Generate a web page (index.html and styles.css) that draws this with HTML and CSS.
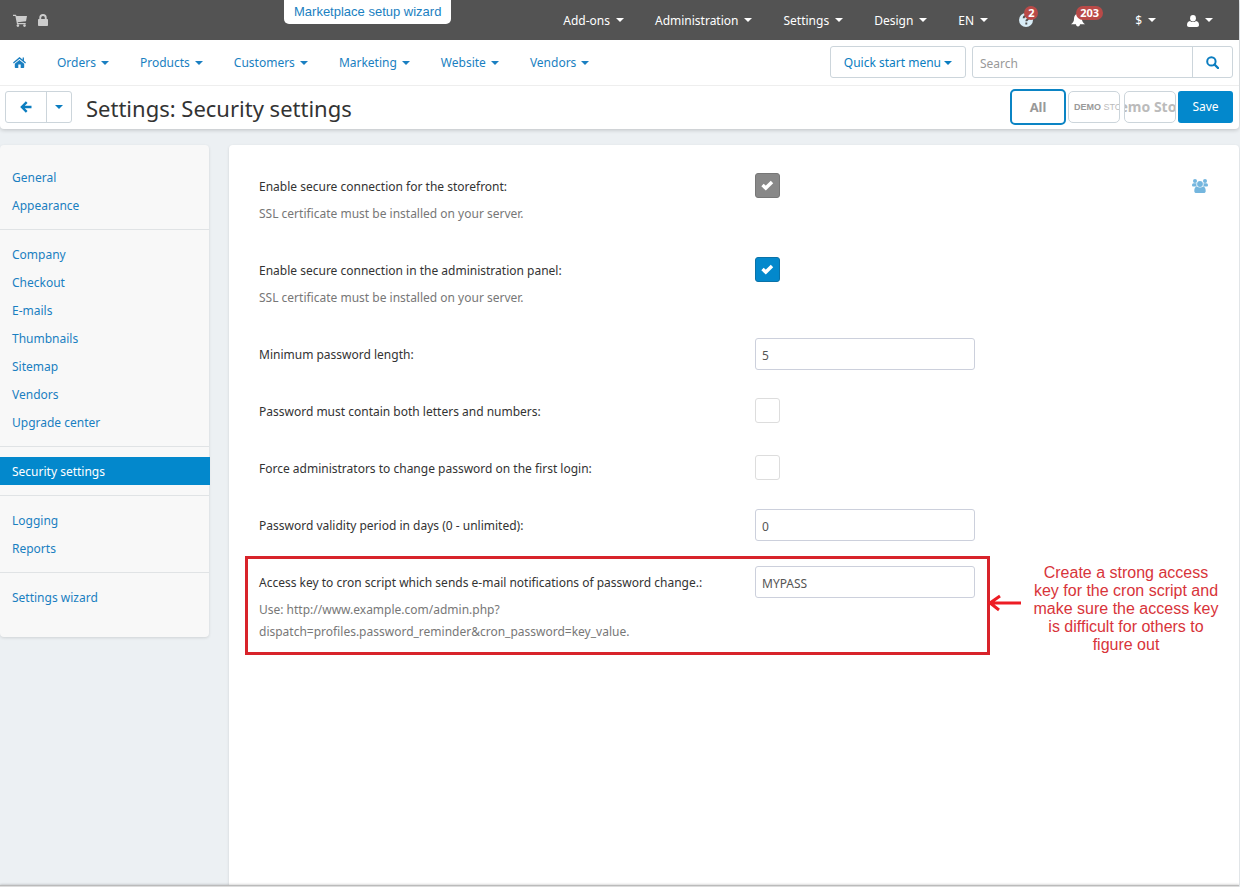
FILE: index.html
```html
<!DOCTYPE html>
<html lang="en">
  <head>
    <meta charset="utf-8">
    <title>Settings: Security settings</title>
    <link rel="stylesheet" href="styles.css">
  </head>
  <body>
    <header class="header">
      <div class="topbar">
        <div class="topbar-left">
          <a href="#" aria-label="Storefront"><svg width="14" height="13" viewBox="0 0 14 13"><path fill="currentColor" d="M0 .7h2.6c.4 0 .6.3.7.8l.1.5H14l-1 5.2-8.3 1 .2.9h7.8v1.1H4L2.4 1.9H0z"/><circle cx="4.9" cy="11.6" r="1.3" fill="currentColor"/><circle cx="11.5" cy="11.6" r="1.3" fill="currentColor"/></svg></a>
          <a href="#" aria-label="Secure"><svg width="12" height="12" viewBox="0 0 12 12"><path fill="currentColor" d="M2.3 5V3.7a3.7 3.7 0 0 1 7.4 0V5h.5c.5 0 .8.3.8.8v5.4c0 .5-.3.8-.8.8H1.800c-.5 0-.8-.3-.8-.8V5.800c0-.5.3-.8.8-.8zM4.200 5h3.600V3.700a1.800 1.800 0 0 0-3.600 0z"/></svg></a>
        </div>
        <a href="#" class="wizard-tab">Marketplace setup wizard</a>
        <nav class="topbar-nav">
          <a href="#" class="drop">Add-ons</a>
          <a href="#" class="drop">Administration</a>
          <a href="#" class="drop">Settings</a>
          <a href="#" class="drop">Design</a>
          <a href="#" class="drop">EN</a>
          <a href="#" class="notify help" aria-label="Help">
            <svg width="14" height="14" viewBox="0 0 14 14"><circle cx="7" cy="7" r="7" fill="#d9edf7"/><path d="M4.700 5.200c0-3 4.800-3 4.800-.1C9.500 6.800 7.300 6.500 7.300 8.300M7.300 9.600v1.900" fill="none" stroke="#535353" stroke-width="1.900"/></svg>
            <span class="badge">2</span>
          </a>
          <a href="#" class="notify bell" aria-label="Notifications">
            <svg width="14" height="14" viewBox="0 0 14 14"><path fill="#fff" d="M7 0c.7 0 1 .5 1 1.100C10.400 1.700 11 4 11 6c0 2.500 1.200 4 3 5.300H9c0 1.300-.8 2.200-2 2.200s-2-.9-2-2.200H0C1.800 10 3 8.500 3 6c0-2 .6-4.300 3-4.900C6 .5 6.300 0 7 0z"/></svg>
            <span class="badge">203</span>
          </a>
          <a href="#" class="drop">$</a>
          <a href="#" class="drop" aria-label="Account"><svg width="12" height="12" viewBox="0 0 12 12"><ellipse cx="6" cy="3.300" rx="2.900" ry="3.300" fill="currentColor"/><path fill="currentColor" d="M3 5.900C1 6.300 0 7.500 0 10c0 1.300.8 2 2 2h8c1.200 0 2-.7 2-2 0-2.500-1-3.700-3-4.100-1.700 1.600-4.300 1.600-6 0z"/></svg></a>
        </nav>
      </div>

      <div class="mainbar">
        <nav class="main-nav">
          <a href="#" class="home" aria-label="Home"><svg width="13" height="11" viewBox="0 0 13 11"><path fill="currentColor" d="M6.500 2.900 11.200 6.700v3.600c0 .4-.3.700-.7.700H7.700V7.600H5.300V11H2.500c-.4 0-.7-.3-.7-.7V6.700z"/><path d="M.4 5.900 6.500.9l6.100 5M10.300.6v3" fill="none" stroke="currentColor" stroke-width="1.300"/></svg></a>
          <a href="#" class="drop">Orders</a>
          <a href="#" class="drop">Products</a>
          <a href="#" class="drop">Customers</a>
          <a href="#" class="drop">Marketing</a>
          <a href="#" class="drop">Website</a>
          <a href="#" class="drop">Vendors</a>
        </nav>
        <button type="button" class="btn quick-menu drop">Quick start menu</button>
        <form class="search">
          <input type="text" placeholder="Search" aria-label="Search">
          <button type="button" aria-label="Find"><svg width="13" height="13" viewBox="0 0 13 13"><circle cx="5.400" cy="5.400" r="4.200" fill="none" stroke="currentColor" stroke-width="2"/><path d="M8.500 8.500 12 12" stroke="currentColor" stroke-width="2.400" stroke-linecap="round"/></svg></button>
        </form>
      </div>

      <div class="titlebar">
        <div class="back-group">
          <button type="button" class="back" aria-label="Back"><svg width="12" height="12" viewBox="0 0 12 12"><path d="M11.500 6H2M6.700 1.200 1.900 6l4.800 4.800" fill="none" stroke="currentColor" stroke-width="2.400"/></svg></button>
          <button type="button" class="back-drop drop" aria-label="History"></button>
        </div>
        <h1 class="title">Settings: Security settings</h1>
        <div class="stores">
          <button type="button" class="store store-all">All</button>
          <button type="button" class="store store-logo"><span><b>DEMO</b> STORE</span></button>
          <button type="button" class="store store-name"><span>Demo Store</span></button>
          <button type="button" class="save">Save</button>
        </div>
      </div>
    </header>

    <div class="content">
      <aside class="sidebar">
        <ul>
          <li><a href="#">General</a></li>
          <li><a href="#">Appearance</a></li>
        </ul>
        <ul>
          <li><a href="#">Company</a></li>
          <li><a href="#">Checkout</a></li>
          <li><a href="#">E-mails</a></li>
          <li><a href="#">Thumbnails</a></li>
          <li><a href="#">Sitemap</a></li>
          <li><a href="#">Vendors</a></li>
          <li><a href="#">Upgrade center</a></li>
        </ul>
        <ul>
          <li class="active"><a href="#">Security settings</a></li>
        </ul>
        <ul>
          <li><a href="#">Logging</a></li>
          <li><a href="#">Reports</a></li>
        </ul>
        <ul>
          <li><a href="#">Settings wizard</a></li>
        </ul>
      </aside>

      <main class="panel">
        <div class="row">
          <div class="text">
            <label for="secure_storefront">Enable secure connection for the storefront:</label>
            <p>SSL certificate must be installed on your server.</p>
          </div>
          <div class="control">
            <input type="checkbox" id="secure_storefront" class="muted" checked>
          </div>
          <a href="#" class="vendors-icon" aria-label="All stores"><svg width="16" height="14" viewBox="0 0 16 14"><g fill="currentColor"><circle cx="3" cy="2" r="2"/><circle cx="13" cy="2" r="2"/><path d="M1.700 4.200h3c-.5 1.200-.4 2.200.2 3.300H1.500C.5 7.500 0 7 0 6.200c0-1.100.6-2 1.700-2zM14.300 4.200h-3c.5 1.200.4 2.200-.2 3.300h3.400c1 0 1.500-.5 1.500-1.300 0-1.100-.6-2-1.700-2z"/><circle cx="8" cy="5" r="2.900"/><path d="M4.900 7.500c2 1.300 4.200 1.300 6.200 0 1.900.2 2.600 2.300 2.600 4.400 0 1.300-.8 2.100-2 2.100H4.300c-1.200 0-2-.8-2-2.100 0-2.100.7-4.200 2.600-4.400z"/></g></svg></a>
        </div>
        <div class="row">
          <div class="text">
            <label for="secure_admin">Enable secure connection in the administration panel:</label>
            <p>SSL certificate must be installed on your server.</p>
          </div>
          <div class="control">
            <input type="checkbox" id="secure_admin" checked>
          </div>
        </div>
        <div class="row">
          <div class="text"><label for="min_length">Minimum password length:</label></div>
          <div class="control"><input type="text" id="min_length" value="5"></div>
        </div>
        <div class="row">
          <div class="text"><label for="mix">Password must contain both letters and numbers:</label></div>
          <div class="control"><input type="checkbox" id="mix"></div>
        </div>
        <div class="row">
          <div class="text"><label for="force">Force administrators to change password on the first login:</label></div>
          <div class="control"><input type="checkbox" id="force"></div>
        </div>
        <div class="row">
          <div class="text"><label for="validity">Password validity period in days (0 - unlimited):</label></div>
          <div class="control"><input type="text" id="validity" value="0"></div>
        </div>
        <div class="row">
          <div class="text">
            <label for="cron_key">Access key to cron script which sends e-mail notifications of password change.:</label>
            <p>Use: http://www.example.com/admin.php?<br>dispatch=profiles.password_reminder&amp;cron_password=key_value.</p>
          </div>
          <div class="control"><input type="text" id="cron_key" value="MYPASS"></div>
          <div class="highlight"></div>
          <div class="callout">
            <svg width="34" height="18" viewBox="0 0 34 18"><path d="M33 9H3M12 2 2 9l9 7" fill="none" stroke="#ed1c24" stroke-width="3"/></svg>
            <p>Create a strong access key for the cron script and make sure the access key is difficult for others to figure out</p>
          </div>
        </div>
      </main>
    </div>
    <footer class="bottom-line"></footer>
  </body>
</html>
```
FILE: styles.css
```css
* {
  box-sizing: border-box;
}
body {
  display: flex;
  flex-direction: column;
  min-height: 100vh;
  margin: 0;
  padding-right: 1px;
  background: #ecf0f3;
  color: #333;
  font: 12px/22px "Noto Sans", "Open Sans", sans-serif;
}
a {
  color: #1a7fc1;
  text-decoration: none;
}
button, input {
  margin: 0;
  font: inherit;
}
button {
  padding: 0;
  color: #0b7dc0;
}
svg {
  display: block;
  flex: none;
}
p, ul {
  margin: 0;
  padding: 0;
  list-style: none;
}

/* links and buttons with a caret */
.drop {
  display: flex;
  align-items: center;
  gap: 5px;
  white-space: nowrap;
}
.drop::after {
  content: "";
  border: 4px solid transparent;
  border-top-color: currentColor;
  border-bottom: 0;
}

/* header */
.header {
  background: #fff;
  border-radius: 0 0 4px 4px;
  box-shadow: 0 1px 4px rgba(0, 0, 0, 0.2);
}
.topbar {
  position: relative;
  display: flex;
  align-items: center;
  justify-content: space-between;
  height: 40px;
  padding: 0 26px 0 13px;
  background: #535353;
}
.topbar-left {
  display: flex;
  align-items: center;
  gap: 10px;
}
.topbar-left a {
  color: #ccc;
}
.wizard-tab {
  position: absolute;
  top: 0;
  left: 284px;
  padding: 1px 10px;
  background: #fff;
  border-radius: 0 0 5px 5px;
  font-family: "Liberation Sans", sans-serif;
  font-size: 13px;
}
.topbar-nav {
  display: flex;
  align-items: center;
  gap: 31px;
}
.topbar-nav a {
  color: #fff;
}
.topbar-nav .drop {
  gap: 6px;
  padding-top: 2px;
}
.topbar-nav .drop::after {
  margin-bottom: 3px;
}
.notify {
  position: relative;
}
.help {
  margin-right: 7px;
}
.bell {
  margin-right: 19px;
}
.badge {
  position: absolute;
  top: -7px;
  left: 5px;
  padding: 0 4px;
  background: #b94a48;
  border-radius: 8px;
  font-size: 11px;
  font-weight: bold;
  line-height: 14px;
}
.mainbar {
  display: flex;
  align-items: center;
  gap: 6px;
  height: 46px;
  padding: 0 6px 1px 13px;
  border-bottom: 1px solid #eee;
}
.main-nav {
  display: flex;
  flex: 1;
  align-items: center;
  gap: 31px;
}
.main-nav .drop {
  padding-top: 2px;
}
.btn, .back-group, .search {
  height: 32px;
  background: #fff;
  border: 1px solid #ccd5db;
  border-radius: 3px;
}
.quick-menu {
  gap: 3px;
  padding: 2px 13px 0;
}
.search {
  display: flex;
  width: 261px;
}
.search input {
  flex: 1;
  min-width: 0;
  padding: 3px 7px 0;
  border: 0;
  background: none;
}
.search input::placeholder {
  color: #999;
}
.search button {
  display: flex;
  align-items: center;
  justify-content: center;
  width: 40px;
  background: none;
  border: 0;
  border-left: 1px solid #ccd5db;
}
.titlebar {
  display: flex;
  align-items: center;
  height: 43px;
  padding: 0 6px 1px 5px;
}
.back-group {
  display: flex;
}
.back, .back-drop {
  justify-content: center;
  background: none;
  border: 0;
}
.back {
  display: flex;
  align-items: center;
  width: 40px;
}
.back-drop {
  width: 25px;
  border-left: 1px solid #ccd5db;
}
.title {
  flex: 1;
  margin: 0 0 0 14px;
  padding-top: 2px;
  font-size: 22px;
  font-weight: normal;
  line-height: 34px;
}
.stores {
  display: flex;
  align-items: center;
}
.store {
  display: flex;
  justify-content: center;
  align-items: center;
  width: 52px;
  height: 32px;
  margin-right: 2px;
  overflow: hidden;
  background: #fff;
  border: 1px solid #ccd5db;
  border-radius: 5px;
  color: #999;
  white-space: nowrap;
}
.store-all {
  width: 56px;
  height: 36px;
  border: 2px solid #0b84c4;
  font-size: 13px;
  font-weight: bold;
}
.store-logo {
  justify-content: flex-start;
  margin-right: 4px;
  padding-left: 5px;
  color: #bbb;
  font-family: "Liberation Sans", sans-serif;
  font-size: 9px;
}
.store-logo b {
  color: #999;
}
.store-name {
  color: #bbb;
  font-size: 14px;
  font-weight: bold;
}
.save {
  width: 55px;
  height: 32px;
  background: #0388cc;
  border: 0;
  border-radius: 3px;
  color: #fff;
}

/* page body */
.content {
  display: flex;
  flex: 1;
  align-items: flex-start;
  gap: 20px;
  padding-top: 16px;
}
.sidebar {
  flex: none;
  width: 209px;
  padding: 18px 0 26px;
  background: #f8f8f8;
  border-radius: 4px;
  box-shadow: 0 1px 3px rgba(0, 0, 0, 0.12);
}
.sidebar ul + ul {
  margin-top: 10px;
  padding-top: 10px;
  border-top: 1px solid #e0e3e5;
}
.sidebar a {
  display: block;
  padding: 4px 12px 2px;
}
.sidebar .active {
  margin-right: -1px;
  background: #0388cc;
}
.sidebar .active a {
  color: #fff;
}
.panel {
  flex: 1;
  align-self: stretch;
  padding: 25px 30px;
  background: #fff;
  border-radius: 4px 4px 0 0;
  box-shadow: 0 1px 3px rgba(0, 0, 0, 0.12);
}
.row {
  position: relative;
  display: flex;
  align-items: flex-start;
  min-height: 32px;
  margin-bottom: 25px;
}
.text {
  flex: none;
  width: 496px;
  padding: 6px 20px 0 0;
}
.text p {
  padding: 5px 0 4px;
  color: #777;
}
.control {
  flex: 1;
}
.control input {
  display: block;
}
.control input[type="text"] {
  width: 220px;
  height: 32px;
  padding: 2px 6px 0;
  border: 1px solid #ccd0dc;
  border-radius: 3px;
  color: #555;
}
.control input[type="checkbox"] {
  appearance: none;
  width: 25px;
  height: 25px;
  margin-top: 3px;
  background: #fff;
  border: 1px solid #ddd;
  border-radius: 3px;
}
.control input[type="checkbox"]:checked {
  background: #0388cc url("data:image/svg+xml,%3Csvg xmlns='http://www.w3.org/2000/svg' width='13' height='11'%3E%3Cpath d='M1.500 5 4.800 8 11 2' fill='none' stroke='%23fff' stroke-width='3.500'/%3E%3C/svg%3E") center no-repeat;
  border-color: #0a72a8;
}
.control input.muted:checked {
  background-color: #888;
  border-color: #777;
}
.vendors-icon {
  margin: 9px 1px 0 0;
  color: #74b6de;
}

/* marked setting with its note */
.highlight {
  position: absolute;
  top: -10px;
  right: 219px;
  bottom: -8px;
  left: -14px;
  border: 3px solid #d8232a;
  pointer-events: none;
}
.callout {
  position: absolute;
  top: -2px;
  right: -12px;
  display: flex;
  align-items: center;
  gap: 9px;
}
.callout svg {
  margin-bottom: 12px;
}
.callout p {
  width: 190px;
  color: #d8343a;
  font: 16px/18px "Liberation Sans", sans-serif;
  text-align: center;
}
.bottom-line {
  position: relative;
  height: 2px;
  background: #bbb;
  border-bottom: 1px solid #ddd;
  box-shadow: 0 -1px 2px rgba(0, 0, 0, 0.15);
}
```
